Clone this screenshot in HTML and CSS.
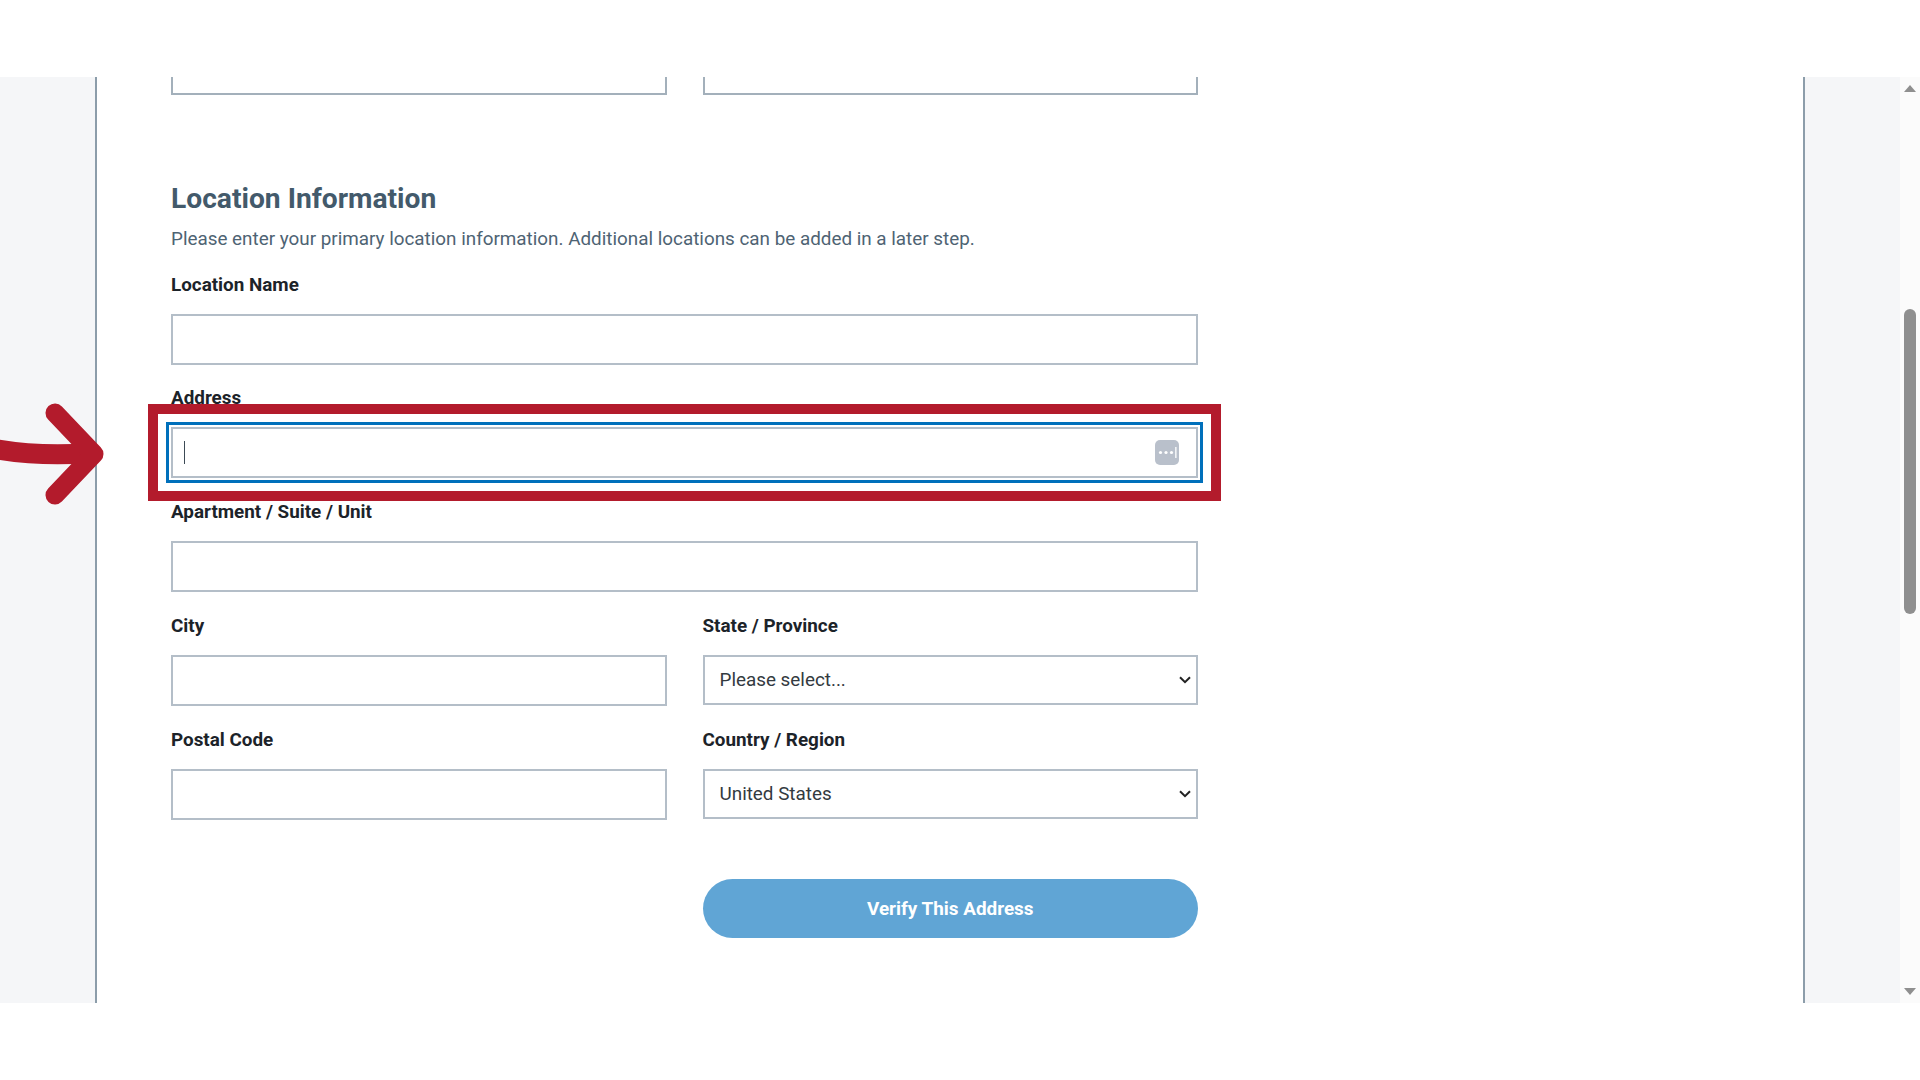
FILE: index.html
```html
<!DOCTYPE html>
<html lang="en">
<head>
  <meta charset="UTF-8">
  <meta name="viewport" content="width=device-width, initial-scale=1.0">
  <title>Location Information</title>
  <link rel="stylesheet" href="styles.css">
</head>
<body>
  <div class="window">
    <div class="gutter"></div>

    <main class="page">
      <!-- Previous row, scrolled mostly out of view -->
      <div class="two-col">
        <div class="cut-input"></div>
        <div class="cut-input"></div>
      </div>

      <h2 class="section-title">Location Information</h2>
      <p class="section-desc">Please enter your primary location information. Additional locations can be added in a later step.</p>

      <div class="field">
        <label for="location-name">Location Name</label>
        <input type="text" id="location-name">
      </div>

      <div class="field">
        <label for="address">Address</label>
        <div class="address-wrap">
          <input type="text" id="address" class="focused">
          <span class="caret"></span>
          <span class="dots-icon">
            <svg width="24" height="25" viewBox="0 0 24 25">
              <rect width="24" height="25" rx="5" fill="#b9c0cb"/>
              <circle cx="5.5" cy="12.5" r="1.6" fill="#fff"/>
              <circle cx="11" cy="12.5" r="1.6" fill="#fff"/>
              <circle cx="16.5" cy="12.5" r="1.6" fill="#fff"/>
              <rect x="20.2" y="7" width="1.3" height="11" fill="#fff"/>
            </svg>
          </span>
          <div class="callout-box"></div>
        </div>
      </div>

      <div class="field">
        <label for="unit">Apartment / Suite / Unit</label>
        <input type="text" id="unit">
      </div>

      <div class="two-col">
        <div class="field">
          <label for="city">City</label>
          <input type="text" id="city">
        </div>
        <div class="field">
          <label for="state">State / Province</label>
          <select id="state">
            <option>Please select...</option>
          </select>
        </div>
        <div class="field">
          <label for="postal">Postal Code</label>
          <input type="text" id="postal">
        </div>
        <div class="field">
          <label for="country">Country / Region</label>
          <select id="country">
            <option>United States</option>
          </select>
        </div>
      </div>

      <div class="two-col actions">
        <div></div>
        <button class="verify-btn">Verify This Address</button>
      </div>
    </main>

    <div class="gutter gutter-right"></div>

    <div class="scrollbar">
      <span class="arrow-up"></span>
      <div class="thumb"></div>
      <span class="arrow-down"></span>
    </div>

    <svg class="callout-arrow" width="110" height="110" viewBox="0 0 110 110">
      <path d="M-5 48 Q40 56 91 52" fill="none" stroke="#b31b2c" stroke-width="20"/>
      <path d="M55 12 L94 53 L55 94" fill="none" stroke="#b31b2c" stroke-width="19" stroke-linecap="round" stroke-linejoin="round"/>
    </svg>
  </div>
</body>
</html>
```

FILE: styles.css
```css
* {
  box-sizing: border-box;
}
body {
  font-family: Roboto, "Liberation Sans", sans-serif;
  background-color: #fff;
  margin: 0;
  padding: 77px 0;
  height: 1080px;
  overflow: hidden;
}
.window {
  display: flex;
  position: relative;
  height: 926px;
  overflow: visible;
}
.gutter {
  width: 97px;
  flex-shrink: 0;
  background-color: #f5f6f8;
  border-right: 2px solid #8c9daa;
}
.gutter-right {
  border-right: none;
  border-left: 2px solid #8c9daa;
}
.page {
  width: 1707px;
  padding-left: 74px;
  overflow: hidden;
}
.two-col {
  display: grid;
  grid-template-columns: 496px 495.5px;
  column-gap: 35.5px;
  width: 1027px;
}
.cut-input {
  height: 18px;
  border: 2px solid #a3b0bb;
  border-top: none;
}
.section-title {
  margin: 86.5px 0 0;
  font-size: 28.2px;
  line-height: 34px;
  font-weight: 700;
  color: #435a6b;
}
.section-desc {
  margin: 10px 0 0;
  font-size: 18.85px;
  line-height: 26px;
  color: #4e6373;
}
.field {
  width: 1027px;
  margin-top: 22.75px;
}
.section-desc + .field {
  margin-top: 22px;
}
.two-col .field {
  width: auto;
}
.field label {
  display: block;
  font-size: 18.85px;
  line-height: 22px;
  font-weight: 700;
  color: #1c2329;
  margin-bottom: 18px;
}
.field input,
.field select {
  display: block;
  width: 100%;
  height: 51px;
  border: 2px solid #b4bec8;
  border-radius: 0;
  background-color: #fff;
  font-family: inherit;
  font-size: 18.85px;
  color: #333a40;
  padding: 0 15px;
}
.field select {
  height: 50px;
  margin-bottom: 1px;
  appearance: none;
  background-image: url("data:image/svg+xml,%3Csvg xmlns='http://www.w3.org/2000/svg' width='12' height='8' viewBox='0 0 12 8'%3E%3Cpath d='M1 1.2 L6 6.2 L11 1.2' fill='none' stroke='%23222' stroke-width='2'/%3E%3C/svg%3E");
  background-repeat: no-repeat;
  background-position: right 5px center;
}
.address-wrap {
  position: relative;
}
.field input.focused {
  outline: 3px solid #0070bb;
  outline-offset: 2px;
}
.caret {
  position: absolute;
  left: 13px;
  top: 14px;
  width: 1px;
  height: 23px;
  background-color: #3c4a55;
}
.dots-icon {
  position: absolute;
  right: 19px;
  top: 13px;
  height: 25px;
}
.callout-box {
  position: absolute;
  left: -23px;
  right: -23px;
  top: -23px;
  bottom: -23px;
  border: 10px solid #b31b2c;
  pointer-events: none;
}
.actions {
  margin-top: 59px;
}
.verify-btn {
  height: 59px;
  border: none;
  border-radius: 30px;
  background-color: #60a5d5;
  color: #fff;
  font-family: inherit;
  font-size: 18.9px;
  font-weight: 700;
}
.scrollbar {
  width: 20px;
  flex-shrink: 0;
  background-color: #fbfbfb;
  position: relative;
}
.thumb {
  position: absolute;
  left: 4px;
  top: 232px;
  width: 12px;
  height: 305px;
  border-radius: 6px;
  background-color: #8f8f8f;
}
.arrow-up,
.arrow-down {
  position: absolute;
  left: 4px;
  width: 0;
  height: 0;
  border-left: 6px solid transparent;
  border-right: 6px solid transparent;
}
.arrow-up {
  top: 8px;
  border-bottom: 7px solid #8f8f8f;
}
.arrow-down {
  bottom: 8px;
  border-top: 7px solid #8f8f8f;
}
.callout-arrow {
  position: absolute;
  left: 0;
  top: 324px;
}
```
